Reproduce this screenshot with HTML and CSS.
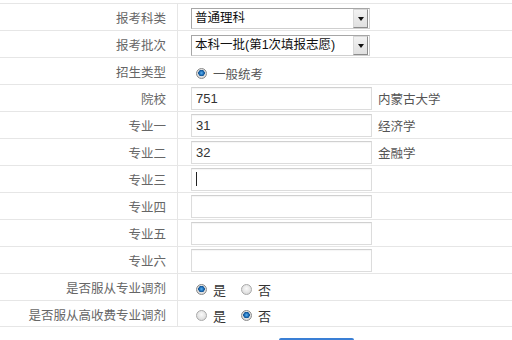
FILE: index.html
```html
<!DOCTYPE html>
<html lang="zh">
<head>
<meta charset="utf-8">
<title>志愿填报</title>
<link rel="stylesheet" href="styles.css">
</head>
<body>
<div class="form">
  <div class="row">
    <div class="label">报考科类</div>
    <div class="value">
      <div class="select"><span class="select-text">普通理科</span><span class="select-btn"><span class="tri"></span></span></div>
    </div>
  </div>
  <div class="row">
    <div class="label">报考批次</div>
    <div class="value">
      <div class="select"><span class="select-text">本科一批(第1次填报志愿)</span><span class="select-btn"><span class="tri"></span></span></div>
    </div>
  </div>
  <div class="row">
    <div class="label">招生类型</div>
    <div class="value radios">
      <span class="radio on"></span><span class="rtext">一般统考</span>
    </div>
  </div>
  <div class="row">
    <div class="label">院校</div>
    <div class="value"><input class="field" type="text" value="751"><span class="note">内蒙古大学</span></div>
  </div>
  <div class="row">
    <div class="label">专业一</div>
    <div class="value"><input class="field" type="text" value="31"><span class="note">经济学</span></div>
  </div>
  <div class="row">
    <div class="label">专业二</div>
    <div class="value"><input class="field" type="text" value="32"><span class="note">金融学</span></div>
  </div>
  <div class="row">
    <div class="label">专业三</div>
    <div class="value"><span class="field-wrap"><input class="field" type="text" value=""><span class="caret"></span></span></div>
  </div>
  <div class="row">
    <div class="label">专业四</div>
    <div class="value"><input class="field" type="text" value=""></div>
  </div>
  <div class="row">
    <div class="label">专业五</div>
    <div class="value"><input class="field" type="text" value=""></div>
  </div>
  <div class="row">
    <div class="label">专业六</div>
    <div class="value"><input class="field" type="text" value=""></div>
  </div>
  <div class="row">
    <div class="label">是否服从专业调剂</div>
    <div class="value radios">
      <span class="radio on"></span><span class="rtext yn">是</span>
      <span class="radio"></span><span class="rtext yn">否</span>
    </div>
  </div>
  <div class="row">
    <div class="label">是否服从高收费专业调剂</div>
    <div class="value radios">
      <span class="radio"></span><span class="rtext yn">是</span>
      <span class="radio on"></span><span class="rtext yn">否</span>
    </div>
  </div>
</div>
<div class="actions"><button class="submit" type="button" aria-label="提交"></button></div>
</body>
</html>
```
FILE: styles.css
```css
html, body {
  margin: 0;
  padding: 0;
  background: #fff;
}
body {
  font-family: "Liberation Sans", "Noto Sans CJK SC", sans-serif;
  font-size: 13px;
  color: #333;
  overflow: hidden;
}
.form {
  margin-top: 3px;
  border-top: 1px solid #e6e6e6;
}
.row {
  display: flex;
  height: 26px;
  border-bottom: 1px solid #e6e6e6;
}
.row:last-child {
  height: 25px;
}
.label {
  width: 166px;
  padding-right: 11px;
  border-right: 1px solid #e6e6e6;
  text-align: right;
  color: #666;
  font-size: 12.5px;
  line-height: 26px;
  padding-top: 2px;
  box-sizing: content-box;
  height: 24px;
  white-space: nowrap;
}
.row:last-child .label {
  height: 23px;
}
.value {
  display: flex;
  align-items: center;
  padding-left: 13px;
  flex: 1;
}
.select {
  display: flex;
  align-items: center;
  width: 177px;
  height: 19px;
  border: 1px solid #b3b3b3;
  border-color: #a6a6a6 #cfcfcf #cfcfcf #a6a6a6;
  background: #fff;
  margin-top: 2px;
}
.select-text {
  flex: 1;
  padding-left: 3px;
  color: #111;
  font-size: 12.5px;
  white-space: nowrap;
  line-height: 19px;
}
.select-btn {
  display: flex;
  align-items: center;
  justify-content: center;
  width: 13px;
  height: 17px;
  margin-right: 1px;
  background: linear-gradient(#f2f2f2, #e0e0e0);
  border: 1px solid;
  border-color: #d8d8d8 #8c8c8c #8c8c8c #d8d8d8;
}
.tri {
  width: 0;
  height: 0;
  border-left: 3.5px solid transparent;
  border-right: 3.5px solid transparent;
  border-top: 4px solid #111;
  margin-top: 1px;
}
.radios {
  padding-top: 4px;
}
.radio {
  display: inline-block;
  width: 9px;
  height: 9px;
  border-radius: 50%;
  border: 1px solid #a9a9a9;
  background: radial-gradient(circle at 50% 40%, #fafafa 0%, #e2e2e2 60%, #cfcfcf 100%);
  margin-left: 5px;
  margin-right: 6px;
}
.radio.on {
  border-color: #8a8a8a;
  background: radial-gradient(circle at 50% 45%, #5fb3f0 0%, #1f6fb8 30%, #0d4f8f 45%, #e4e4e4 52%, #c8c8c8 100%);
}
.rtext {
  color: #555;
  font-size: 12.5px;
}
.rtext.yn {
  color: #333;
  font-size: 13px;
  margin-right: 10px;
}
.field-wrap {
  position: relative;
  display: inline-flex;
}
.field {
  box-sizing: border-box;
  width: 181px;
  height: 23px;
  border: 1px solid #dcdcdc;
  border-top-color: #d0d0d0;
  box-shadow: inset 0 1px 1px rgba(0,0,0,0.04);
  padding: 0 4px;
  margin: 1px 0 0 0;
  font-family: "Liberation Sans", "Noto Sans CJK SC", sans-serif;
  font-size: 13px;
  color: #333;
  outline: none;
  background: #fff;
}
.caret {
  position: absolute;
  left: 5px;
  top: 5px;
  width: 1px;
  height: 14px;
  background: #222;
}
.note {
  margin-left: 6px;
  color: #555;
  font-size: 12.5px;
  padding-top: 1px;
}
.actions {
  padding-left: 279px;
  margin-top: 11px;
}
.submit {
  display: block;
  width: 75px;
  height: 30px;
  border: none;
  padding: 0;
  background: #3a7fd5;
  border-radius: 2px;
}
```
